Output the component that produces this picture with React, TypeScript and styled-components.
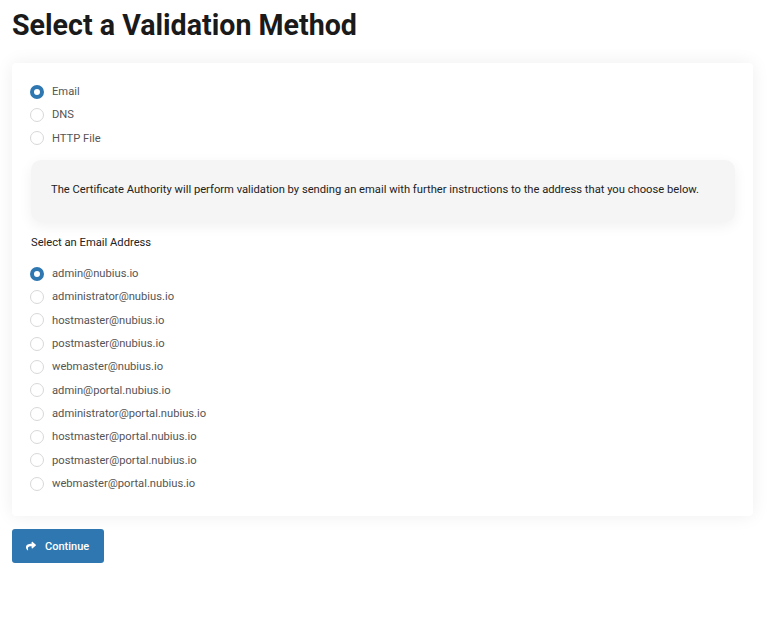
import React, { useState } from "react";
import styled, { createGlobalStyle } from "styled-components";
import { FaShare } from "react-icons/fa";

const BLUE = "#2f77b0";
const TEXT = "#555";
const DARK = "#222";

const GlobalStyle = createGlobalStyle`
  html, body {
    margin: 0;
    padding: 0;
    background: #ffffff;
    font-family: Roboto, "Liberation Sans", Arial, sans-serif;
  }
`;

const Page = styled.div`
  padding: 7px 28px 40px 12px;
`;

const Title = styled.h1`
  margin: 0 0 19px 0;
  font-size: 28.6px;
  line-height: 37px;
  font-weight: 700;
  color: #1a1a1a;
`;

const Card = styled.div`
  background: #fff;
  border-radius: 4px;
  box-shadow: 0 0 18px rgba(0, 0, 0, 0.07);
  padding: 17px 18px 21px 19px;
`;

const RadioGroup = styled.div`
  display: flex;
  flex-direction: column;
`;

const Row = styled.label`
  display: flex;
  align-items: center;
  height: 23.33px;
  gap: 8px;
  font-size: 11.2px;
  color: ${TEXT};
  cursor: pointer;
  margin-left: -1px;
`;

const Circle = styled.span<{ $checked: boolean }>`
  box-sizing: border-box;
  width: 14px;
  height: 14px;
  border-radius: 50%;
  background: #fff;
  border: ${({ $checked }) =>
    $checked ? `4.5px solid ${BLUE}` : "1px solid #d8d8d8"};
  flex: none;
`;

const InfoBox = styled.div`
  margin: 10px 0 0 0;
  background: #f5f5f5;
  border-radius: 10px;
  box-shadow: 0 4px 14px rgba(0, 0, 0, 0.06);
  padding: 23px 20px 25px 20px;
  font-size: 11.2px;
  line-height: 14px;
  color: ${DARK};
`;

const SectionLabel = styled.div`
  margin: 14px 0 12px 0;
  font-size: 11.2px;
  line-height: 14px;
  color: ${DARK};
`;

const ContinueButton = styled.button`
  margin-top: 13px;
  display: inline-flex;
  align-items: center;
  gap: 9px;
  height: 34px;
  width: 92px;
  padding: 0 0 0 14px;
  border: none;
  border-radius: 3px;
  background: ${BLUE};
  color: #fff;
  font-family: inherit;
  font-size: 11px;
  font-weight: 500;
  cursor: pointer;
  svg {
    width: 10px;
    height: 10px;
  }
`;

const methods = ["Email", "DNS", "HTTP File"];
const emails = [
  "admin@nubius.io",
  "administrator@nubius.io",
  "hostmaster@nubius.io",
  "postmaster@nubius.io",
  "webmaster@nubius.io",
  "admin@portal.nubius.io",
  "administrator@portal.nubius.io",
  "hostmaster@portal.nubius.io",
  "postmaster@portal.nubius.io",
  "webmaster@portal.nubius.io",
];

const Radio = ({
  label,
  checked,
  onSelect,
}: {
  label: string;
  checked: boolean;
  onSelect: () => void;
}) => (
  <Row onClick={onSelect}>
    <Circle $checked={checked} />
    <span>{label}</span>
  </Row>
);

export default function App() {
  const [method, setMethod] = useState("Email");
  const [email, setEmail] = useState(emails[0]);

  return (
    <Page>
      <GlobalStyle />
      <Title>Select a Validation Method</Title>
      <Card>
        <RadioGroup>
          {methods.map((m) => (
            <Radio
              key={m}
              label={m}
              checked={method === m}
              onSelect={() => setMethod(m)}
            />
          ))}
        </RadioGroup>
        <InfoBox>
          The Certificate Authority will perform validation by sending an email
          with further instructions to the address that you choose below.
        </InfoBox>
        <SectionLabel>Select an Email Address</SectionLabel>
        <RadioGroup>
          {emails.map((e) => (
            <Radio
              key={e}
              label={e}
              checked={email === e}
              onSelect={() => setEmail(e)}
            />
          ))}
        </RadioGroup>
      </Card>
      <ContinueButton type="button">
        <FaShare />
        Continue
      </ContinueButton>
    </Page>
  );
}
